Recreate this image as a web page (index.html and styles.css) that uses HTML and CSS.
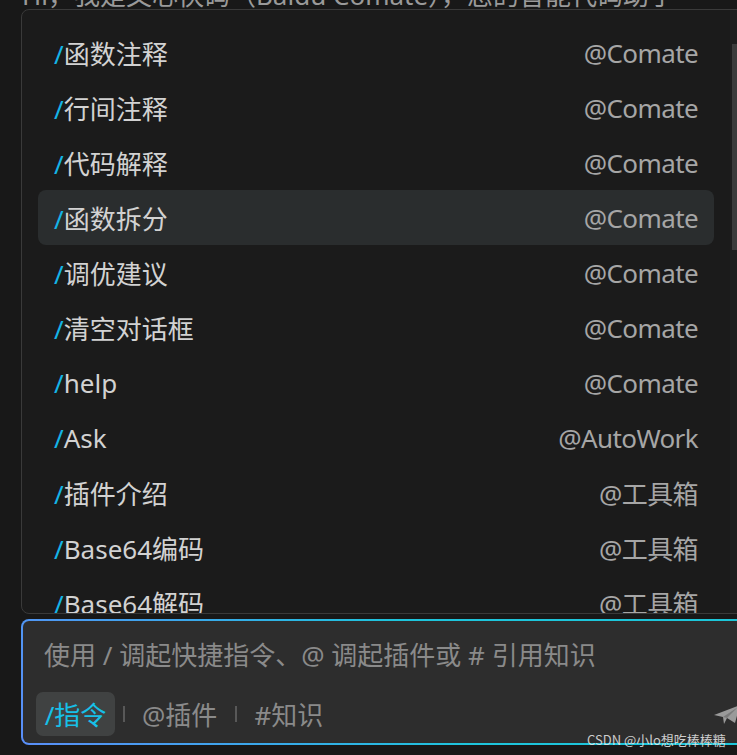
FILE: index.html
```html
<!DOCTYPE html>
<html lang="zh-CN">
<head>
<meta charset="utf-8">
<link rel="stylesheet" href="styles.css">
</head>
<body>
<div class="page">
  <div class="greeting"><span>Hi，我是文心快码（Baidu Comate），您的智能代码助手</span></div>
  <div class="panel">
    <ul class="list">
      <li class="row"><span class="cmd"><b>/</b>函数注释</span><span class="src">@Comate</span></li>
      <li class="row"><span class="cmd"><b>/</b>行间注释</span><span class="src">@Comate</span></li>
      <li class="row"><span class="cmd"><b>/</b>代码解释</span><span class="src">@Comate</span></li>
      <li class="row active"><span class="cmd"><b>/</b>函数拆分</span><span class="src">@Comate</span></li>
      <li class="row"><span class="cmd"><b>/</b>调优建议</span><span class="src">@Comate</span></li>
      <li class="row"><span class="cmd"><b>/</b>清空对话框</span><span class="src">@Comate</span></li>
      <li class="row"><span class="cmd"><b>/</b>help</span><span class="src">@Comate</span></li>
      <li class="row"><span class="cmd"><b>/</b>Ask</span><span class="src">@AutoWork</span></li>
      <li class="row"><span class="cmd"><b>/</b>插件介绍</span><span class="src">@工具箱</span></li>
      <li class="row"><span class="cmd"><b>/</b>Base64编码</span><span class="src">@工具箱</span></li>
      <li class="row"><span class="cmd"><b>/</b>Base64解码</span><span class="src">@工具箱</span></li>
    </ul>
    <div class="scrollbar"><div class="thumb"></div></div>
  </div>
  <div class="input">
    <div class="placeholder">使用 / 调起快捷指令、@ 调起插件或 # 引用知识</div>
    <div class="footer">
      <span class="chip">/指令</span>
      <span class="sep sep-first"></span>
      <span class="tool">@插件</span>
      <span class="sep"></span>
      <span class="tool">#知识</span>
      <svg class="send" width="28" height="24" viewBox="0 0 28 24">
        <path d="M1 13 L27 3 L22 21 L14 16 L11 22 L10 15 Z" fill="#9a9a9a"/>
        <path d="M10 15 L25 5 L14 16 Z" fill="#7a7a7a"/>
      </svg>
    </div>
  </div>
  <div class="watermark">CSDN @小lo想吃棒棒糖</div>
</div>
</body>
</html>
```

FILE: styles.css
```css
* { box-sizing: border-box; }
html, body {
  margin: 0;
  padding: 0;
  background: #181818;
}
body {
  width: 737px;
  height: 755px;
  overflow: hidden;
  font-family: "Noto Sans", "Noto Sans CJK SC", sans-serif;
}
.page {
  position: relative;
  width: 737px;
  height: 755px;
  overflow: hidden;
}
.greeting {
  height: 9px;
  overflow: hidden;
  display: flex;
  align-items: flex-end;
  padding-left: 22px;
  color: #9a9a9a;
  font-size: 26px;
  line-height: 26px;
  white-space: nowrap;
}
.greeting span {
  display: block;
  margin-bottom: 1px;
}
.panel {
  margin-left: 21px;
  width: 740px;
  height: 605px;
  border: 1px solid #3a3a3a;
  border-radius: 8px;
  background: #1b1b1b;
  display: flex;
  overflow: hidden;
}
.list {
  list-style: none;
  margin: 0;
  padding: 15px 16px 0;
  width: 708px;
  flex: none;
}
.row {
  height: 55px;
  border-radius: 8px;
  display: flex;
  align-items: center;
  justify-content: space-between;
  padding: 0 16px;
  font-size: 26px;
  white-space: nowrap;
}
.row.active {
  background: #2a2d2e;
}
.cmd {
  color: #d2d2d2;
}
.cmd b {
  font-weight: normal;
  color: #14b4e6;
}
.src {
  color: #a6a6a6;
  letter-spacing: -0.6px;
}
.scrollbar {
  flex: none;
  width: 14px;
  background: #1e1e1e;
  padding-left: 2px;
  padding-top: 34px;
}
.thumb {
  width: 12px;
  height: 206px;
  background: #3c3c3c;
}
.input {
  margin-top: 5px;
  margin-left: 21px;
  width: 739px;
  height: 126px;
  border: 2px solid transparent;
  border-radius: 8px;
  background: linear-gradient(#2d2d2d, #2d2d2d) padding-box,
              linear-gradient(60deg, #5a8ef8 0%, #3aa8ea 30%, #1ec4dc 55%, #1cc6d8 100%) border-box;
  display: flex;
  flex-direction: column;
}
.placeholder {
  padding: 16px 0 0 21px;
  font-size: 26px;
  line-height: 36px;
  color: #8a8a8a;
  white-space: nowrap;
}
.footer {
  margin-top: auto;
  padding: 0 17px 7px 13px;
  display: flex;
  align-items: center;
  font-size: 26px;
  white-space: nowrap;
}
.chip {
  height: 44px;
  width: 79px;
  display: flex;
  align-items: center;
  justify-content: center;
  border-radius: 7px;
  background: #404242;
  color: #16c0e8;
}
.sep {
  width: 2px;
  height: 16px;
  background: #585858;
  margin: 0 17px 0 18px;
}
.sep.sep-first {
  margin-left: 8px;
}
.tool {
  color: #8a8a8a;
}
.send {
  margin-left: auto;
  flex: none;
}
.watermark {
  position: absolute;
  left: 587px;
  top: 731px;
  font-family: "Noto Sans CJK SC", sans-serif;
  font-size: 13px;
  line-height: 18px;
  color: rgba(235, 235, 235, 0.85);
  white-space: nowrap;
}
```
